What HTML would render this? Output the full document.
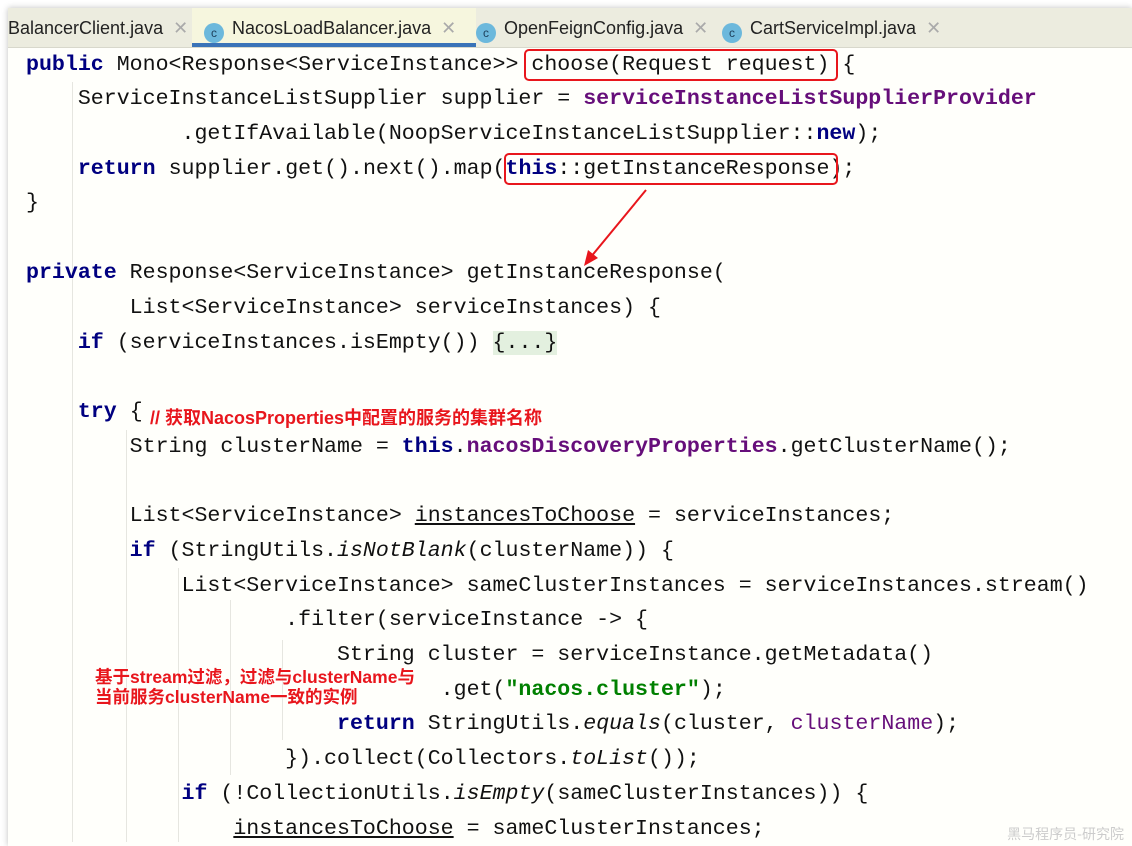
<!DOCTYPE html>
<html><head><meta charset="utf-8"><style>
body{margin:0;width:1132px;height:846px;background:#fff;overflow:hidden;position:relative;font-family:"Liberation Sans",sans-serif}
.win{position:absolute;left:8px;top:8px;width:1124px;height:838px;background:#fffffb;box-shadow:0 0 6px rgba(0,0,0,.25)}
.tabs{position:absolute;left:8px;top:8px;width:1124px;height:39px;background:#ececdf;border-bottom:1px solid #d8d8cc}
.tab{position:absolute;top:8px;height:39px;font-size:18px;color:#222;line-height:40px;white-space:nowrap}
.ic{display:inline-block;width:20px;height:20px;border-radius:50%;background:#6cb8dc;color:#1d3f5a;font-size:12px;line-height:20px;text-align:center;vertical-align:-3px;margin-right:8px}
.x{color:#aaa;margin-left:10px;font-size:18px}
.code{position:absolute;left:0;top:1px;font-family:"Liberation Mono",monospace;font-size:21.6px;color:#111;white-space:pre}
.l{position:absolute;left:26px;height:34px;line-height:34px}
.k{color:#000080;font-weight:bold}
.p{color:#660e7a;font-weight:bold}
.pl{color:#660e7a}
.s{color:#008000;font-weight:bold}
.i{font-style:italic}
.u{text-decoration:underline}
.g{position:absolute;width:1px;background:#e6e6e0}
.box{position:absolute;border:2px solid #e8161c;border-radius:5px}
.note{position:absolute;color:#e8161c;font-weight:bold;font-family:"Liberation Sans","Noto Sans CJK SC",sans-serif;text-shadow:0 0 2px #fff,0 0 2px #fff;white-space:nowrap}
</style></head><body>
<div class="win"></div>
<div class="tabs"></div>
<div class="tab" style="left:8px;">BalancerClient.java<span class="x">✕</span></div>
<div class="tab" style="left:192px;width:272px;background:#f6f6de;padding-left:12px;border-bottom:4px solid #3a73b8;height:35px">
<span class="ic">c</span>NacosLoadBalancer.java<span class="x">✕</span></div>
<div class="tab" style="left:476px;"><span class="ic">c</span>OpenFeignConfig.java<span class="x">✕</span></div>
<div class="tab" style="left:722px;"><span class="ic">c</span>CartServiceImpl.java<span class="x">✕</span></div>

<div class="g" style="left:72px;top:82px;height:760px"></div>
<div class="g" style="left:126px;top:430px;height:412px"></div>
<div class="g" style="left:178px;top:568px;height:274px"></div>
<div class="g" style="left:230px;top:600px;height:175px"></div>
<div class="g" style="left:282px;top:640px;height:100px"></div>

<div class="code">
<div class="l" style="top:47px"><span class="k">public</span> Mono&lt;Response&lt;ServiceInstance&gt;&gt; choose(Request request) {</div>
<div class="l" style="top:81px">    ServiceInstanceListSupplier supplier = <span class="p">serviceInstanceListSupplierProvider</span></div>
<div class="l" style="top:116px">            .getIfAvailable(NoopServiceInstanceListSupplier::<span class="k">new</span>);</div>
<div class="l" style="top:151px">    <span class="k">return</span> supplier.get().next().map(<span class="k">this</span>::getInstanceResponse);</div>
<div class="l" style="top:185px">}</div>
<div class="l" style="top:255px"><span class="k">private</span> Response&lt;ServiceInstance&gt; getInstanceResponse(</div>
<div class="l" style="top:290px">        List&lt;ServiceInstance&gt; serviceInstances) {</div>
<div class="l" style="top:325px">    <span class="k">if</span> (serviceInstances.isEmpty()) <span style="background:#e3f0df">{...}</span></div>
<div class="l" style="top:394px">    <span class="k">try</span> {</div>
<div class="l" style="top:429px">        String clusterName = <span class="k">this</span>.<span class="p">nacosDiscoveryProperties</span>.getClusterName();</div>
<div class="l" style="top:498px">        List&lt;ServiceInstance&gt; <span class="u">instancesToChoose</span> = serviceInstances;</div>
<div class="l" style="top:533px">        <span class="k">if</span> (StringUtils.<span class="i">isNotBlank</span>(clusterName)) {</div>
<div class="l" style="top:568px">            List&lt;ServiceInstance&gt; sameClusterInstances = serviceInstances.stream()</div>
<div class="l" style="top:602px">                    .filter(serviceInstance -&gt; {</div>
<div class="l" style="top:637px">                        String cluster = serviceInstance.getMetadata()</div>
<div class="l" style="top:672px">                                .get(<span class="s">"nacos.cluster"</span>);</div>
<div class="l" style="top:706px">                        <span class="k">return</span> StringUtils.<span class="i">equals</span>(cluster, <span class="pl">clusterName</span>);</div>
<div class="l" style="top:741px">                    }).collect(Collectors.<span class="i">toList</span>());</div>
<div class="l" style="top:776px">            <span class="k">if</span> (!CollectionUtils.<span class="i">isEmpty</span>(sameClusterInstances)) {</div>
<div class="l" style="top:811px">                <span class="u">instancesToChoose</span> = sameClusterInstances;</div>
</div>

<div class="box" style="left:524px;top:49px;width:310px;height:28px"></div>
<div class="box" style="left:504px;top:153px;width:330px;height:28px"></div>
<svg style="position:absolute;left:0;top:0" width="1132" height="846">
<line x1="646" y1="190" x2="590" y2="258" stroke="#e8161c" stroke-width="2"/>
<polygon points="584,266 588,250 598,258" fill="#e8161c"/>
</svg>
<div class="note" style="left:150px;top:407px;font-size:18px;line-height:22px">// 获取NacosProperties中配置的服务的集群名称</div>
<div class="note" style="left:95px;top:668px;font-size:17.5px;line-height:19.5px">基于stream过滤，过滤与clusterName与<br>当前服务clusterName一致的实例</div>
<div style="position:absolute;right:8px;bottom:2px;font-size:14px;color:#ccc;font-family:'Noto Sans CJK SC',sans-serif">黑马程序员-研究院</div>
</body></html>
